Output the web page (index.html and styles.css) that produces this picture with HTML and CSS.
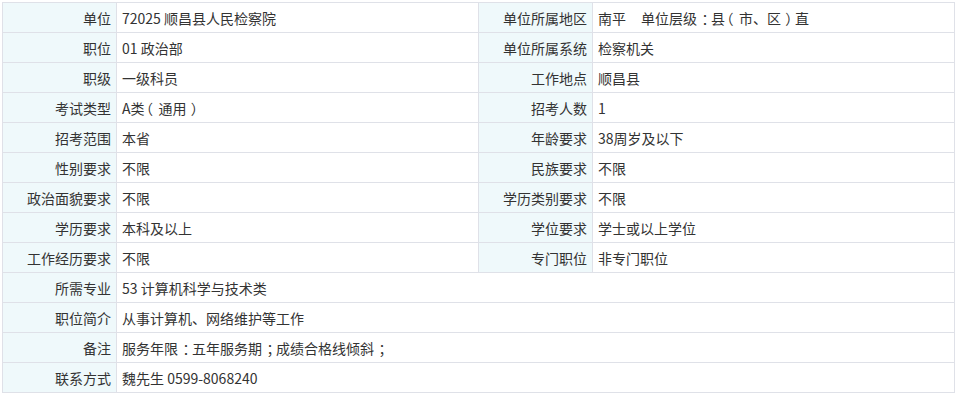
FILE: index.html
```html
<!DOCTYPE html>
<html lang="zh-CN">
<head>
<meta charset="utf-8">
<title>职位详情</title>
<link rel="stylesheet" href="styles.css">
</head>
<body>
<table class="info">
  <colgroup>
    <col class="c-label"><col class="c-value"><col class="c-label"><col class="c-value">
  </colgroup>
  <tbody>
    <tr><th>单位</th><td>72025 顺昌县人民检察院</td><th>单位所属地区</th><td>南平<span class="gap"></span>单位层<span class="pre-c">级</span><span class="punc-c">：</span><span class="pre-o">县</span><span class="punc-o">（</span>市、<span class="pre-x">区</span><span class="punc-x">）</span>直</td></tr>
    <tr><th>职位</th><td>01 政治部</td><th>单位所属系统</th><td>检察机关</td></tr>
    <tr><th>职级</th><td>一级科员</td><th>工作地点</th><td>顺昌县</td></tr>
    <tr><th>考试类型</th><td>A<span class="pre-o">类</span><span class="punc-o">（</span>通<span class="pre-x">用</span><span class="punc-x">）</span></td><th>招考人数</th><td>1</td></tr>
    <tr><th>招考范围</th><td>本省</td><th>年龄要求</th><td>38周岁及以下</td></tr>
    <tr><th>性别要求</th><td>不限</td><th>民族要求</th><td>不限</td></tr>
    <tr><th>政治面貌要求</th><td>不限</td><th>学历类别要求</th><td>不限</td></tr>
    <tr><th>学历要求</th><td>本科及以上</td><th>学位要求</th><td>学士或以上学位</td></tr>
    <tr><th>工作经历要求</th><td>不限</td><th>专门职位</th><td>非专门职位</td></tr>
    <tr><th>所需专业</th><td colspan="3">53 计算机科学与技术类</td></tr>
    <tr><th>职位简介</th><td colspan="3">从事计算机、网络维护等工作</td></tr>
    <tr><th>备注</th><td colspan="3">服务年<span class="pre-c">限</span><span class="punc-c">：</span>五年服务<span class="pre-c">期</span><span class="punc-c">；</span>成绩合格线倾<span class="pre-c">斜</span><span class="punc-c">；</span></td></tr>
    <tr><th>联系方式</th><td colspan="3">魏先生 0599-8068240</td></tr>
  </tbody>
</table>
</body>
</html>
```

FILE: styles.css
```css
html, body {
  margin: 0;
  padding: 0;
  background: #ffffff;
}
body {
  padding: 2px;
  font-family: "Noto Sans CJK SC", "Noto Sans", "Liberation Sans", sans-serif;
  font-size: 14px;
  color: #333333;
}
.info {
  border-collapse: collapse;
  table-layout: fixed;
  width: 953px;
}
.c-label { width: 114px; }
.c-value { width: 362px; }
.info th,
.info td {
  border: 1px solid #dfe1e8;
  height: 29px;
  padding: 0 5px;
  line-height: 20px;
  vertical-align: middle;
  white-space: nowrap;
  overflow: hidden;
}
.info th {
  background: #eff9fb;
  text-align: right;
  font-weight: normal;
}
.info td {
  background: #ffffff;
  text-align: left;
}
.gap {
  display: inline-block;
  width: 15px;
}
/* Full-width punctuation re-centred in its em box (the advance stays 1em):
   the character before gives or takes space, the mark takes or gives it back. */
.pre-c { letter-spacing: 0.32em; }
.punc-c { letter-spacing: -0.32em; }
.pre-o { letter-spacing: -0.4em; }
.punc-o { letter-spacing: 0.4em; }
.pre-x { letter-spacing: 0.3em; }
.punc-x { letter-spacing: -0.3em; }
```
